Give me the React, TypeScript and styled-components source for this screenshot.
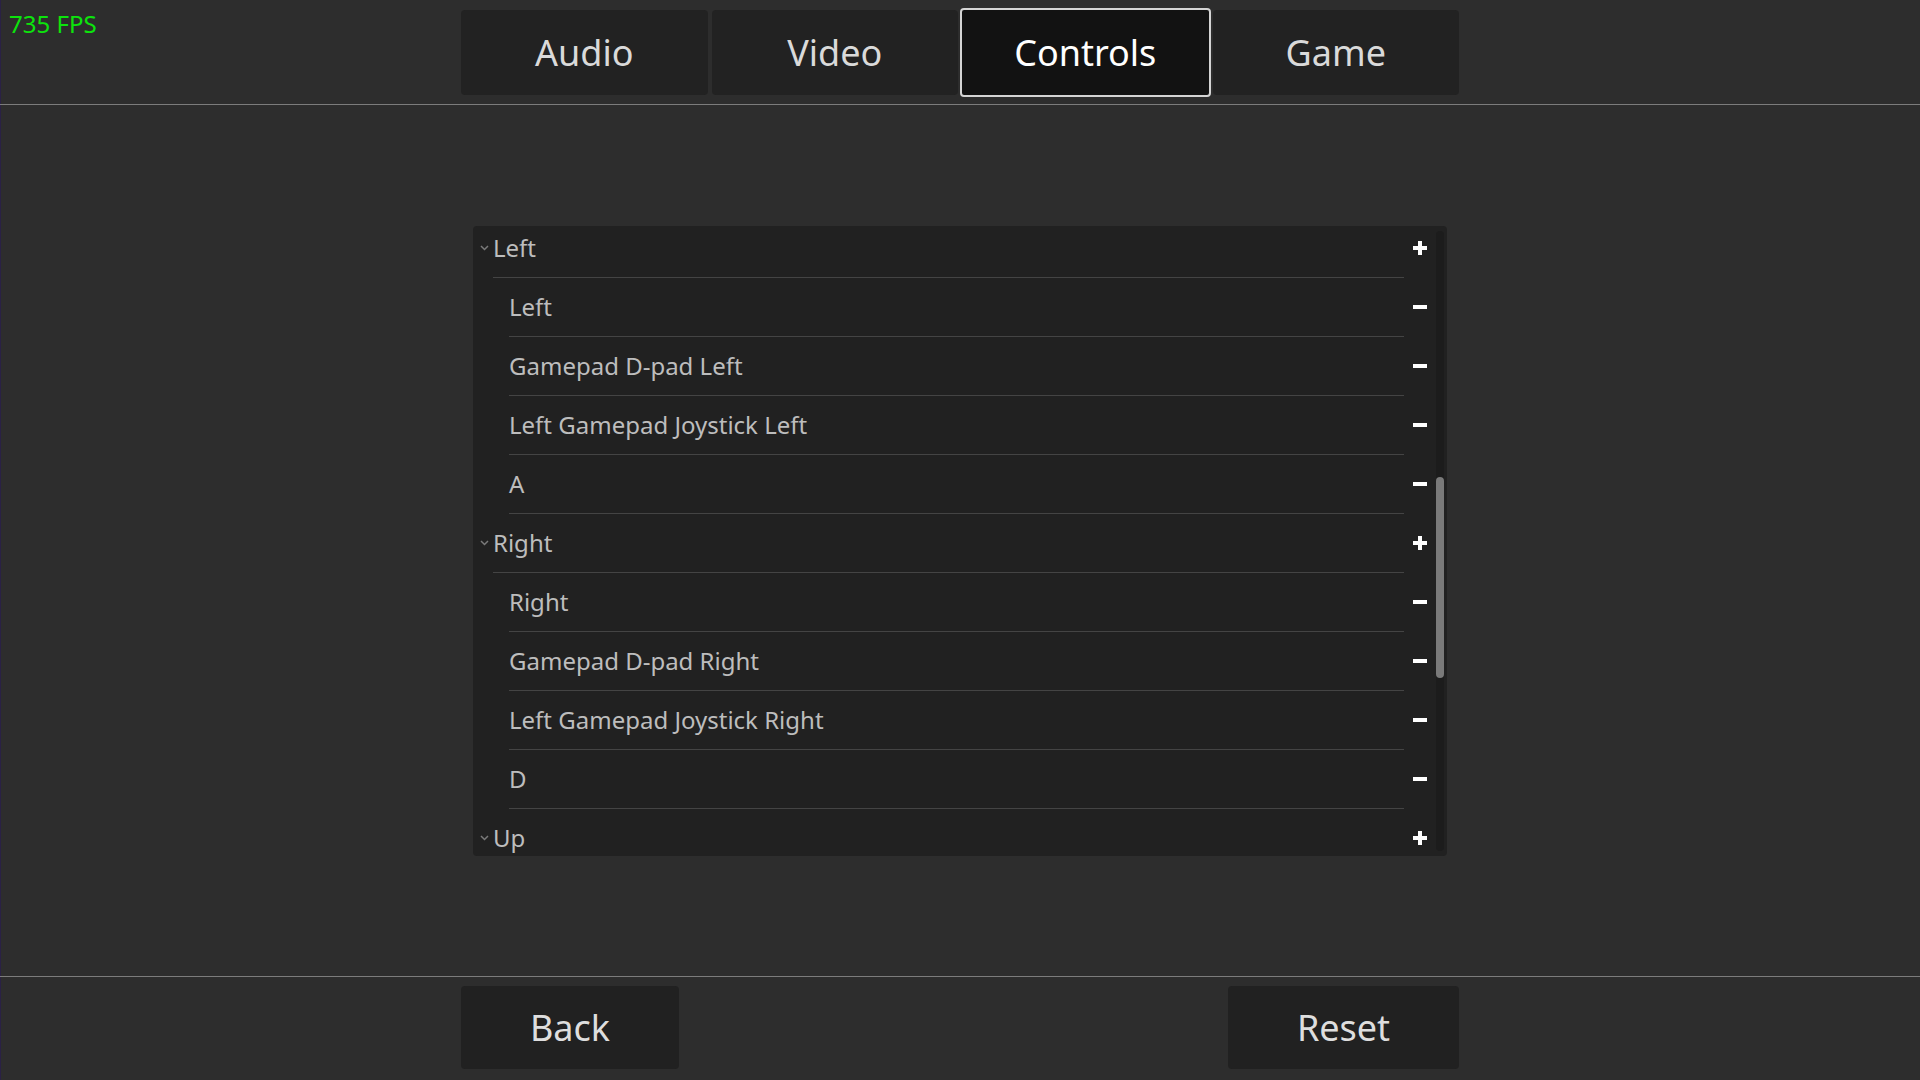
import React, { useLayoutEffect, useRef, useState } from "react";
import styled, { createGlobalStyle } from "styled-components";

const GlobalStyle = createGlobalStyle`
  html, body {
    margin: 0;
    padding: 0;
    background: #2d2d2d;
    font-family: "Noto Sans", "Open Sans", sans-serif;
  }
`;

const ROW_HEIGHT = 59;
const TRACK_MARGIN = 5;

const Screen = styled.div`
  position: relative;
  width: 1920px;
  height: 1080px;
  display: flex;
  flex-direction: column;
  background: #2d2d2d;
  box-shadow: inset 1px 0 0 #2a2145;
  overflow: hidden;
`;

const FpsLabel = styled.div`
  position: absolute;
  top: 12px;
  left: 9px;
  font-size: 24px;
  line-height: 1;
  color: #0ce40c;
`;

const Header = styled.div`
  height: 105px;
  display: flex;
  justify-content: center;
  padding-top: 10px;
  box-sizing: border-box;
  border-bottom: 1px solid #7c7c7c;
`;

const TabBar = styled.div`
  width: 998px;
  height: 85px;
  display: grid;
  grid-template-columns: repeat(4, 1fr);
  gap: 4px;
`;

const Tab = styled.div<{ $active?: boolean }>`
  display: flex;
  align-items: center;
  justify-content: center;
  border-radius: 4px;
  font-size: 36px;
  box-sizing: border-box;
  margin: ${(p) => (p.$active ? "-2px" : "0")};
  background: ${(p) => (p.$active ? "#121212" : "#222222")};
  color: ${(p) => (p.$active ? "#ffffff" : "#dadada")};
  border: ${(p) => (p.$active ? "2px solid #d4d4d4" : "none")};
`;

const Middle = styled.div`
  flex: 1;
  display: flex;
  align-items: center;
  justify-content: center;
`;

const Panel = styled.div`
  width: 974px;
  height: 630px;
  background: #212121;
  border-radius: 4px;
  padding-right: 3px;
  box-sizing: border-box;
  overflow: hidden;
  display: flex;
`;

const ScrollArea = styled.div`
  flex: 1;
  height: 100%;
  overflow-y: scroll;
  scrollbar-width: none;

  &::-webkit-scrollbar {
    display: none;
  }
`;

const ScrollTrack = styled.div`
  position: relative;
  width: 8px;
  flex-shrink: 0;
  margin: ${TRACK_MARGIN}px 0;
  background: #1c1c1c;
  border-radius: 4px;
`;

const ScrollThumb = styled.div`
  position: absolute;
  left: 0;
  width: 8px;
  background: #7a7a7a;
  border-radius: 4px;
`;

const Row = styled.div`
  height: ${ROW_HEIGHT}px;
  display: flex;
  align-items: stretch;
  font-size: 24px;
  color: #bdbdbd;
`;

const Indent = styled.div<{ $width: number }>`
  width: ${(p) => p.$width}px;
  flex-shrink: 0;
  display: flex;
  align-items: center;
  justify-content: flex-end;
  padding-right: 4px;
  box-sizing: border-box;
`;

const Label = styled.div`
  flex: 1;
  display: flex;
  align-items: center;
  border-bottom: 1px solid #444444;
  white-space: nowrap;
`;

const IconCell = styled.div`
  width: 32px;
  flex-shrink: 0;
  display: flex;
  align-items: center;
  justify-content: center;
`;

const Footer = styled.div`
  height: 104px;
  border-top: 1px solid #7c7c7c;
  box-sizing: border-box;
  display: flex;
  justify-content: center;
  padding-top: 9px;
`;

const FooterInner = styled.div`
  width: 998px;
  display: flex;
  justify-content: space-between;
  align-items: flex-start;
`;

const FooterButton = styled.div<{ $width: number }>`
  width: ${(p) => p.$width}px;
  height: 83px;
  display: flex;
  align-items: center;
  justify-content: center;
  background: #212121;
  border-radius: 4px;
  font-size: 36px;
  color: #dedede;
`;

const Chevron = () => (
  <svg width="9" height="6" viewBox="0 0 9 6">
    <path d="M1 1 L4.5 4.5 L8 1" fill="none" stroke="#7a7a7a" strokeWidth="1.5" />
  </svg>
);

const PlusIcon = () => (
  <svg width="14" height="14" viewBox="0 0 14 14">
    <rect x="0" y="5" width="14" height="4" fill="#fff" />
    <rect x="5" y="0" width="4" height="14" fill="#fff" />
  </svg>
);

const MinusIcon = () => (
  <svg width="14" height="4" viewBox="0 0 14 4">
    <rect x="0" y="0" width="14" height="4" fill="#fff" />
  </svg>
);

interface IAction {
  name: string;
  bindings: string[];
}

const ACTIONS: IAction[] = [
  { name: "Jump", bindings: ["Space", "Gamepad A Button", "W"] },
  {
    name: "Dash",
    bindings: ["Shift", "Gamepad B Button", "Right Gamepad Trigger", "K"],
  },
  { name: "Pause", bindings: ["Escape", "Gamepad Start", "P"] },
  {
    name: "Left",
    bindings: ["Left", "Gamepad D-pad Left", "Left Gamepad Joystick Left", "A"],
  },
  {
    name: "Right",
    bindings: [
      "Right",
      "Gamepad D-pad Right",
      "Left Gamepad Joystick Right",
      "D",
    ],
  },
  {
    name: "Up",
    bindings: ["Up", "Gamepad D-pad Up", "Left Gamepad Joystick Up", "W"],
  },
  {
    name: "Down",
    bindings: ["Down", "Gamepad D-pad Down", "Left Gamepad Joystick Down", "S"],
  },
];

const TABS = ["Audio", "Video", "Controls", "Game"];

const ActionRows = ({ action }: { action: IAction }) => (
  <>
    <Row>
      <Indent $width={20}>
        <Chevron />
      </Indent>
      <Label>{action.name}</Label>
      <IconCell>
        <PlusIcon />
      </IconCell>
    </Row>
    {action.bindings.map((b, i) => (
      <Row key={i}>
        <Indent $width={36} />
        <Label>{b}</Label>
        <IconCell>
          <MinusIcon />
        </IconCell>
      </Row>
    ))}
  </>
);

export default function App() {
  const scrollRef = useRef<HTMLDivElement>(null);
  const [thumb, setThumb] = useState({ top: 0, height: 0 });

  useLayoutEffect(() => {
    const el = scrollRef.current;
    if (!el) return;
    // list is scrolled down so the "Left" action sits at the top
    el.scrollTop = 13 * ROW_HEIGHT + 7;
    const track = el.clientHeight - TRACK_MARGIN * 2;
    const height = (track * el.clientHeight) / el.scrollHeight;
    const top =
      (el.scrollTop / (el.scrollHeight - el.clientHeight)) * (track - height);
    setThumb({ top, height });
  }, []);

  return (
    <>
      <GlobalStyle />
      <Screen>
        <FpsLabel>735 FPS</FpsLabel>
        <Header>
          <TabBar>
            {TABS.map((t) => (
              <Tab key={t} $active={t === "Controls"}>
                {t}
              </Tab>
            ))}
          </TabBar>
        </Header>
        <Middle>
          <Panel>
            <ScrollArea ref={scrollRef}>
              {ACTIONS.map((a) => (
                <ActionRows key={a.name} action={a} />
              ))}
            </ScrollArea>
            <ScrollTrack>
              <ScrollThumb style={{ top: thumb.top, height: thumb.height }} />
            </ScrollTrack>
          </Panel>
        </Middle>
        <Footer>
          <FooterInner>
            <FooterButton $width={218}>Back</FooterButton>
            <FooterButton $width={231}>Reset</FooterButton>
          </FooterInner>
        </Footer>
      </Screen>
    </>
  );
}
